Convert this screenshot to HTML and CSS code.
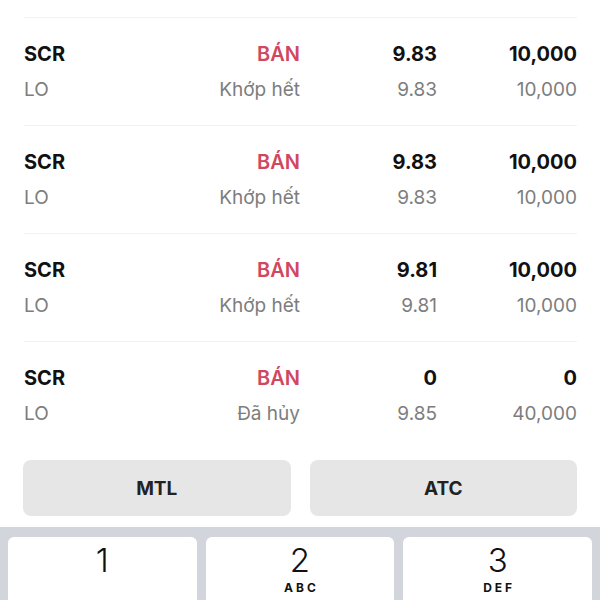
FILE: index.html
```html
<!DOCTYPE html>
<html lang="vi">
<head>
    <meta charset="UTF-8">
    <meta name="viewport" content="width=device-width, initial-scale=1.0">
    <title>Sổ lệnh</title>
    <link rel="stylesheet" href="styles.css">
</head>
<body>
    <!-- Danh sách lệnh -->
    <div class="order-list">
        <div class="order-row">
            <div class="cell name">SCR</div>
            <div class="cell side">BÁN</div>
            <div class="cell price">9.83</div>
            <div class="cell qty">10,000</div>
            <div class="cell sub">LO</div>
            <div class="cell sub right">Khớp hết</div>
            <div class="cell sub right">9.83</div>
            <div class="cell sub right">10,000</div>
        </div>
        <div class="order-row">
            <div class="cell name">SCR</div>
            <div class="cell side">BÁN</div>
            <div class="cell price">9.83</div>
            <div class="cell qty">10,000</div>
            <div class="cell sub">LO</div>
            <div class="cell sub right">Khớp hết</div>
            <div class="cell sub right">9.83</div>
            <div class="cell sub right">10,000</div>
        </div>
        <div class="order-row">
            <div class="cell name">SCR</div>
            <div class="cell side">BÁN</div>
            <div class="cell price">9.81</div>
            <div class="cell qty">10,000</div>
            <div class="cell sub">LO</div>
            <div class="cell sub right">Khớp hết</div>
            <div class="cell sub right">9.81</div>
            <div class="cell sub right">10,000</div>
        </div>
        <div class="order-row">
            <div class="cell name">SCR</div>
            <div class="cell side">BÁN</div>
            <div class="cell price">0</div>
            <div class="cell qty">0</div>
            <div class="cell sub">LO</div>
            <div class="cell sub right">Đã hủy</div>
            <div class="cell sub right">9.85</div>
            <div class="cell sub right">40,000</div>
        </div>
    </div>

    <!-- Loại giá nhanh -->
    <div class="quick-prices">
        <button class="quick-btn">MTL</button>
        <button class="quick-btn">ATC</button>
    </div>

    <!-- Bàn phím số -->
    <div class="keypad">
        <div class="key"><span class="digit">1</span><span class="letters"></span></div>
        <div class="key"><span class="digit">2</span><span class="letters">ABC</span></div>
        <div class="key"><span class="digit">3</span><span class="letters">DEF</span></div>
    </div>
</body>
</html>
```

FILE: styles.css
```css
* {
    margin: 0;
    padding: 0;
    box-sizing: border-box;
}

body {
    font-family: 'Inter', 'Roboto', sans-serif;
    background-color: #fff;
    color: #111;
    width: 600px;
    height: 600px;
    overflow: hidden;
}

/* Danh sách lệnh */
.order-list {
    padding-top: 17px;
}

.order-row {
    display: grid;
    grid-template-columns: 1fr 100px 137px 140px;
    grid-template-rows: 34px 36px;
    align-items: center;
    margin: 0 23px 0 24px;
    padding: 19px 0 18px;
    border-top: 1px solid #f2f2f2;
}

.cell {
    white-space: nowrap;
}

.name {
    font-size: 20px;
    font-weight: 700;
    color: #111;
}

.side {
    text-align: right;
    font-size: 20px;
    font-weight: 600;
    color: #d04760;
}

.price,
.qty {
    text-align: right;
    font-size: 20px;
    font-weight: 700;
    color: #111;
}

.sub {
    font-size: 19px;
    color: #7d7d7d;
}

.sub.right {
    text-align: right;
}

/* Nút loại giá */
.quick-prices {
    display: flex;
    gap: 19px;
    padding: 11px 23px;
}

.quick-btn {
    flex: 1;
    height: 56px;
    border: none;
    border-radius: 8px;
    background-color: #e6e6e6;
    font-family: inherit;
    font-size: 19px;
    font-weight: 700;
    color: #222;
}

/* Bàn phím */
.keypad {
    display: grid;
    grid-template-columns: repeat(3, 1fr);
    gap: 9px;
    padding: 10px 8px 0;
    background-color: #d2d5db;
    height: 80px;
}

.key {
    display: flex;
    flex-direction: column;
    align-items: center;
    height: 70px;
    padding-top: 6px;
    background-color: #fff;
    border-radius: 6px;
}

.digit {
    font-size: 33px;
    font-weight: 300;
    line-height: 34px;
    color: #111;
}

.letters {
    font-size: 12px;
    font-weight: 700;
    letter-spacing: 3px;
    line-height: 21px;
    color: #111;
    padding-left: 3px;
}
```
